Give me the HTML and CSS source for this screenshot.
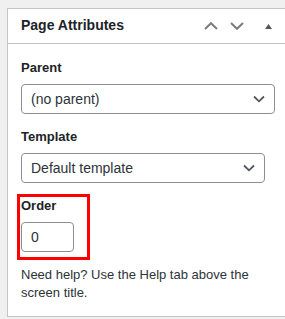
FILE: index.html
```html
<!DOCTYPE html>
<html lang="en">
<head>
    <meta charset="UTF-8">
    <meta name="viewport" content="width=device-width, initial-scale=1.0">
    <title>Page Attributes</title>
    <link rel="stylesheet" href="styles.css">
</head>
<body>
    <div class="postbox">
        <div class="postbox-header">
            <h2>Page Attributes</h2>
            <button class="handle-btn" aria-label="Move up">
                <svg width="14" height="8" viewBox="0 0 14 8"><polyline points="1,7 7,1.2 13,7"></polyline></svg>
            </button>
            <button class="handle-btn" aria-label="Move down">
                <svg width="14" height="8" viewBox="0 0 14 8"><polyline points="1,1 7,6.8 13,1"></polyline></svg>
            </button>
            <button class="handle-btn toggle" aria-label="Toggle panel">
                <svg width="7" height="5" viewBox="0 0 7 5"><polygon points="3.5,0 7,5 0,5"></polygon></svg>
            </button>
        </div>

        <div class="inside">
            <label class="field-label first" for="parent_id">Parent</label>
            <select id="parent_id" class="parent-select">
                <option>(no parent)</option>
            </select>

            <label class="field-label" for="page_template">Template</label>
            <select id="page_template" class="template-select">
                <option>Default template</option>
            </select>

            <div class="order-box">
                <label class="field-label order-label" for="menu_order">Order</label>
                <input id="menu_order" class="order-input" type="text" value="0">
            </div>

            <p class="help">Need help? Use the Help tab above the screen title.</p>
        </div>
    </div>
</body>
</html>
```

FILE: styles.css
```css
* {
    box-sizing: border-box;
}

html, body {
    overflow: hidden;
}

body {
    margin: 0;
    background: #f0f0f1;
    font-family: 'Liberation Sans', Arial, sans-serif;
    color: #1d2327;
}

.postbox {
    margin: 8px 0 0 7px;
    width: 280px;
    background: #fff;
    border: 1px solid #c3c4c7;
}

.postbox-header {
    display: flex;
    align-items: center;
    height: 35px;
    border-bottom: 1px solid #c3c4c7;
}

.postbox-header h2 {
    flex: 1;
    margin: 0;
    padding-left: 13px;
    font-size: 14px;
    font-weight: bold;
    line-height: 1.4;
    color: #1d2327;
}

.handle-btn {
    width: 26px;
    height: 34px;
    padding: 0;
    border: none;
    background: transparent;
    display: flex;
    align-items: center;
    justify-content: center;
    cursor: pointer;
}

.handle-btn svg polyline {
    fill: none;
    stroke: #787c82;
    stroke-width: 2;
}

.handle-btn.toggle {
    width: 36px;
}

.handle-btn.toggle svg polygon {
    fill: #50575e;
}

.inside {
    padding: 0 13px 14px;
}

.field-label {
    display: block;
    margin: 14px 0 7px;
    font-size: 13px;
    font-weight: bold;
    line-height: 18px;
}

.field-label.first {
    margin-top: 15px;
}

select {
    display: block;
    height: 30px;
    padding: 0 24px 0 9px;
    border: 1px solid #8c8f94;
    border-radius: 4px;
    background: #fff url("data:image/svg+xml,%3Csvg xmlns='http://www.w3.org/2000/svg' width='12' height='8' viewBox='0 0 12 8'%3E%3Cpolyline points='1,1.5 6,6.3 11,1.5' fill='none' stroke='%2350575e' stroke-width='1.8'/%3E%3C/svg%3E") no-repeat right 9px center;
    font-family: inherit;
    font-size: 14px;
    color: #2c3338;
    -webkit-appearance: none;
    appearance: none;
}

.parent-select {
    width: 254px;
}

.template-select {
    width: 244px;
}

.order-box {
    width: fit-content;
    margin: 11px 0 0 -4px;
    padding: 0 13px 5px 1px;
    border: 3px solid #ff0000;
}

.order-label {
    margin-top: 0;
}

.order-input {
    display: block;
    width: 53px;
    height: 30px;
    padding: 0 9px;
    border: 1px solid #8c8f94;
    border-radius: 4px;
    font-family: inherit;
    font-size: 14px;
    color: #2c3338;
}

.help {
    margin: 6px 0 0;
    font-size: 13px;
    line-height: 18px;
    color: #2c3338;
}
```
